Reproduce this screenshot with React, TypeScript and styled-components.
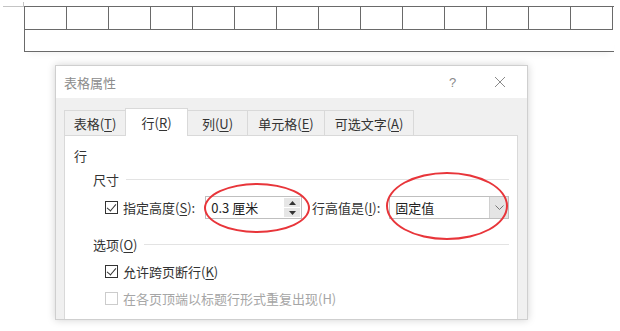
import React from "react";
import styled, { createGlobalStyle } from "styled-components";

const GlobalStyle = createGlobalStyle`
	html, body {
		margin: 0;
		padding: 0;
		background: #ffffff;
	}
	body {
		font-family: "Noto Sans CJK SC", "Noto Sans", sans-serif;
		font-size: 13px;
		color: #333333;
	}
`;

const COLUMNS = 14;

const tabs = [
	{ label: "表格", key: "T", width: 62 },
	{ label: "行", key: "R", width: 63 },
	{ label: "列", key: "U", width: 61 },
	{ label: "单元格", key: "E", width: 78 },
	{ label: "可选文字", key: "A", width: 90 },
];

const App = () => {
	return (
		<>
			<GlobalStyle />
			<Page>
				<DocTable>
					<Marker />
					<CellRow>
						{Array.from({ length: COLUMNS }).map((_, i) => (
							<Cell key={i} />
						))}
					</CellRow>
					<WideRow />
				</DocTable>

				<Dialog>
					<TitleBar>
						<Title>表格属性</Title>
						<TitleButtons>
							<TitleButton>?</TitleButton>
							<TitleButton>
								<svg width="12" height="12" viewBox="0 0 12 12">
									<path d="M1 1 L11 11 M11 1 L1 11" stroke="#8a8a8a" strokeWidth="1" fill="none" />
								</svg>
							</TitleButton>
						</TitleButtons>
					</TitleBar>

					<Body>
						<TabBar>
							{tabs.map((t) => (
								<Tab key={t.key} $active={t.key === "R"} $width={t.width}>
									{t.label}(<u>{t.key}</u>)
								</Tab>
							))}
						</TabBar>

						<Panel>
							<PanelTitle>行</PanelTitle>

							<SectionHeader>
								<span>尺寸</span>
								<Rule />
							</SectionHeader>
							<FieldRow>
								<CheckLabel>
									<CheckBox $checked />
									<span>
										指定高度(<u>S</u>):
									</span>
								</CheckLabel>
								<SpinInput>
									<InputText>0.3&nbsp;厘米</InputText>
									<SpinButtons>
										<SpinButton>
											<svg width="7" height="4" viewBox="0 0 7 4">
												<path d="M0 4 L3.5 0 L7 4 Z" fill="#333" />
											</svg>
										</SpinButton>
										<SpinButton>
											<svg width="7" height="4" viewBox="0 0 7 4">
												<path d="M0 0 L3.5 4 L7 0 Z" fill="#333" />
											</svg>
										</SpinButton>
									</SpinButtons>
								</SpinInput>
								<FieldLabel>
									行高值是(<u>I</u>):
								</FieldLabel>
								<Select>
									<InputText>固定值</InputText>
									<SelectArrow>
										<svg width="9" height="5" viewBox="0 0 9 5">
											<path d="M0.5 0.5 L4.5 4.5 L8.5 0.5" stroke="#777" strokeWidth="1" fill="none" />
										</svg>
									</SelectArrow>
								</Select>
							</FieldRow>

							<SectionHeader $gap={16}>
								<span>
									选项(<u>O</u>)
								</span>
								<Rule />
							</SectionHeader>
							<OptionRow $gap={8}>
								<CheckLabel>
									<CheckBox $checked />
									<span>
										允许跨页断行(<u>K</u>)
									</span>
								</CheckLabel>
							</OptionRow>
							<OptionRow $gap={7}>
								<CheckLabel $disabled>
									<CheckBox $disabled />
									<span>在各页顶端以标题行形式重复出现(H)</span>
								</CheckLabel>
							</OptionRow>
						</Panel>
					</Body>
				</Dialog>

				<Ellipse $left={204} $top={183} $w={106} $h={50} />
				<Ellipse $left={386} $top={172} $w={122} $h={68} />
			</Page>
		</>
	);
};

export default App;

const Page = styled.div`
	position: relative;
	width: 620px;
	height: 331px;
	overflow: hidden;
	background: #ffffff;
`;

const DocTable = styled.div`
	position: relative;
	margin-left: 24px;
	padding-top: 6px;
	width: ${COLUMNS * 42 + 2}px;
`;

const Marker = styled.div`
	position: absolute;
	left: -21px;
	top: 6px;
	width: 21px;
	height: 1px;
	background: #c4c4c4;
	&::after {
		content: "";
		position: absolute;
		left: 20px;
		top: -4px;
		width: 1px;
		height: 4px;
		background: #c4c4c4;
	}
`;

const CellRow = styled.div`
	display: grid;
	grid-template-columns: repeat(${COLUMNS}, 42px);
	border-top: 1px solid #6a6a6a;
	border-left: 1px solid #6a6a6a;
	height: 23px;
`;

const Cell = styled.div`
	border-right: 1px solid #6a6a6a;
	border-bottom: 1px solid #6a6a6a;
`;

const WideRow = styled.div`
	height: 21px;
	border-left: 1px solid #6a6a6a;
	border-bottom: 1px solid #6a6a6a;
	box-shadow: 0 6px 6px -4px rgba(0, 0, 0, 0.05);
`;

const Dialog = styled.div`
	margin: 13px 0 0 55px;
	width: 471px;
	height: 253px;
	border: 1px solid #cfcfcf;
	background: #f0f0f0;
	box-shadow: 0 0 8px rgba(0, 0, 0, 0.18);
	display: flex;
	flex-direction: column;
`;

const TitleBar = styled.div`
	height: 32px;
	background: #ffffff;
	display: flex;
	align-items: center;
	justify-content: space-between;
	padding-left: 8px;
`;

const Title = styled.div`
	color: #8c8c8c;
	font-size: 13px;
`;

const TitleButtons = styled.div`
	display: flex;
	height: 100%;
	padding-right: 4px;
`;

const TitleButton = styled.div`
	width: 47px;
	height: 100%;
	display: flex;
	align-items: center;
	justify-content: center;
	color: #8a8a8a;
	font-family: "Liberation Sans", sans-serif;
	font-size: 13px;
`;

const Body = styled.div`
	flex: 1;
	display: flex;
	flex-direction: column;
	padding: 10px 9px 0 8px;
	min-height: 0;
`;

const TabBar = styled.div`
	display: flex;
	align-items: flex-end;
	height: 28px;
	position: relative;
	z-index: 1;
`;

const Tab = styled.div<{ $active?: boolean; $width: number }>`
	width: ${({ $width }) => $width}px;
	height: ${({ $active }) => ($active ? 28 : 26)}px;
	display: flex;
	align-items: center;
	justify-content: center;
	box-sizing: border-box;
	background: ${({ $active }) => ($active ? "#ffffff" : "#f0f0f0")};
	border: 1px solid #d9d9d9;
	border-bottom: ${({ $active }) => ($active ? "none" : "1px solid #d9d9d9")};
	margin-left: -1px;
	padding-bottom: ${({ $active }) => ($active ? 1 : 0)}px;
	color: #333333;
	white-space: nowrap;
	&:first-child {
		margin-left: 0;
	}
	u {
		text-underline-offset: 2px;
	}
`;

const Panel = styled.div`
	flex: 1;
	margin-top: -1px;
	background: #ffffff;
	border: 1px solid #d9d9d9;
	border-bottom: none;
	padding: 0 8px 0 9px;
	display: flex;
	flex-direction: column;
`;

const PanelTitle = styled.div`
	height: 20px;
	margin-top: 10px;
	line-height: 20px;
`;

const SectionHeader = styled.div<{ $gap?: number }>`
	display: flex;
	align-items: center;
	height: 18px;
	margin-top: ${({ $gap }) => $gap ?? 4}px;
	padding-left: 19px;
	white-space: nowrap;
	u {
		text-underline-offset: 2px;
	}
`;

const Rule = styled.div`
	flex: 1;
	height: 1px;
	background: #e3e3e3;
	margin-left: 7px;
`;

const FieldRow = styled.div`
	display: flex;
	align-items: center;
	height: 23px;
	margin-top: 8px;
	padding-left: 31px;
	white-space: nowrap;
	u {
		text-underline-offset: 2px;
	}
`;

const OptionRow = styled.div<{ $gap: number }>`
	display: flex;
	align-items: center;
	height: 20px;
	margin-top: ${({ $gap }) => $gap}px;
	padding-left: 31px;
	u {
		text-underline-offset: 2px;
	}
`;

const CheckLabel = styled.label<{ $disabled?: boolean }>`
	display: flex;
	align-items: center;
	gap: 5px;
	color: ${({ $disabled }) => ($disabled ? "#a6a6a6" : "#333333")};
	white-space: nowrap;
`;

const CheckBox = styled.span<{ $checked?: boolean; $disabled?: boolean }>`
	position: relative;
	width: 13px;
	height: 13px;
	box-sizing: border-box;
	border: 1px solid ${({ $disabled }) => ($disabled ? "#cccccc" : "#333333")};
	background: #ffffff;
	flex-shrink: 0;
	&::after {
		content: "";
		display: ${({ $checked }) => ($checked ? "block" : "none")};
		position: absolute;
		left: 3px;
		top: 0px;
		width: 4px;
		height: 8px;
		border-right: 1.2px solid #333333;
		border-bottom: 1.2px solid #333333;
		transform: rotate(40deg);
	}
`;

const SpinInput = styled.div`
	display: flex;
	align-items: stretch;
	width: 98px;
	height: 23px;
	box-sizing: border-box;
	margin-left: 10px;
	border: 1px solid #bfbfbf;
	background: #ffffff;
`;

const InputText = styled.div`
	flex: 1;
	display: flex;
	align-items: center;
	padding-left: 5px;
	color: #222222;
`;

const SpinButtons = styled.div`
	display: flex;
	flex-direction: column;
	gap: 1px;
	width: 16px;
	padding: 1px 1px 1px 0;
`;

const SpinButton = styled.div`
	flex: 1;
	display: flex;
	align-items: center;
	justify-content: center;
	background: #e6e6e6;
`;

const FieldLabel = styled.span`
	margin-left: 10px;
`;

const Select = styled.div`
	display: flex;
	align-items: stretch;
	width: 121px;
	height: 23px;
	box-sizing: border-box;
	margin-left: 9px;
	border: 1px solid #bfbfbf;
	background: #ffffff;
`;

const SelectArrow = styled.div`
	width: 18px;
	display: flex;
	align-items: center;
	justify-content: center;
	background: #e5e5e5;
	border-left: 1px solid #d0d0d0;
`;

const Ellipse = styled.div<{ $left: number; $top: number; $w: number; $h: number }>`
	position: absolute;
	left: ${({ $left }) => $left}px;
	top: ${({ $top }) => $top}px;
	width: ${({ $w }) => $w}px;
	height: ${({ $h }) => $h}px;
	box-sizing: border-box;
	border: 2px solid #e8353a;
	border-radius: 50%;
	pointer-events: none;
	z-index: 2;
`;
